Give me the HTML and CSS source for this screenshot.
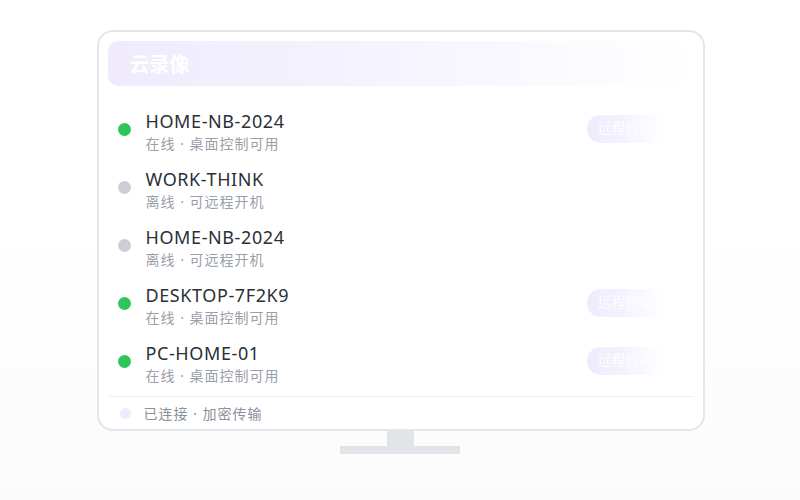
FILE: index.html
```html
<!DOCTYPE html>
<html lang="zh">
<head>
<meta charset="utf-8">
<title>云录像</title>
<link rel="stylesheet" href="styles.css">
</head>
<body>
<div class="stage">
  <div class="monitor">
    <div class="header">
      <span class="title">云录像</span>
      <span class="more">•••</span>
    </div>
    <div class="list">
      <div class="row">
        <span class="dot on"></span>
        <div class="info"><div class="name">HOME-NB-2024</div><div class="sub">在线 · 桌面控制可用</div></div>
        <span class="btn">远程控制</span>
      </div>
      <div class="row">
        <span class="dot off"></span>
        <div class="info"><div class="name">WORK-THINK</div><div class="sub">离线 · 可远程开机</div></div>
      </div>
      <div class="row">
        <span class="dot off"></span>
        <div class="info"><div class="name">HOME-NB-2024</div><div class="sub">离线 · 可远程开机</div></div>
      </div>
      <div class="row">
        <span class="dot on"></span>
        <div class="info"><div class="name">DESKTOP-7F2K9</div><div class="sub">在线 · 桌面控制可用</div></div>
        <span class="btn">远程控制</span>
      </div>
      <div class="row">
        <span class="dot on"></span>
        <div class="info"><div class="name">PC-HOME-01</div><div class="sub">在线 · 桌面控制可用</div></div>
        <span class="btn">远程控制</span>
      </div>
    </div>
    <div class="footer">
      <span class="fdot"></span>
      <span class="ftext">已连接 · 加密传输</span>
    </div>
  </div>
  <div class="neck"></div>
  <div class="base"></div>
</div>
</body>
</html>
```

FILE: styles.css
```css
html, body {
  margin: 0;
  padding: 0;
}
body {
  width: 800px;
  height: 500px;
  background: linear-gradient(180deg, #ffffff 0%, #ffffff 45%, #fbfbfb 100%);
  font-family: "Noto Sans", "Noto Sans CJK SC", sans-serif;
  overflow: hidden;
}
.stage {
  display: flex;
  flex-direction: column;
  align-items: center;
  padding-top: 30px;
}
.monitor {
  box-sizing: border-box;
  width: 608px;
  height: 401px;
  margin-left: 1px;
  border: 2px solid #e3e6ea;
  border-radius: 16px;
  background: #ffffff;
  padding: 9px 9px 0 9px;
  display: flex;
  flex-direction: column;
}
.header {
  height: 45px;
  border-radius: 10px;
  background: linear-gradient(90deg, #efebfd 0%, #f5f3fe 45%, #ffffff 100%);
  display: flex;
  align-items: center;
  justify-content: space-between;
  padding: 0 22px;
}
.title {
  color: #ffffff;
  font-family: "Noto Sans CJK SC", sans-serif;
  font-weight: 700;
  font-size: 20px;
}
.more {
  color: #ffffff;
  font-size: 14px;
  letter-spacing: 4px;
  margin-right: 6px;
}
.list {
  margin-top: 15px;
  display: flex;
  flex-direction: column;
}
.row {
  height: 58px;
  display: flex;
  align-items: center;
  padding-left: 10px;
  padding-right: 29px;
}
.dot {
  width: 13px;
  height: 13px;
  border-radius: 50%;
  flex: none;
  margin-right: 15px;
  margin-top: -2px;
}
.dot.on { background: #2ec55a; }
.dot.off { background: #cbced4; }
.info {
  flex: 1;
  display: flex;
  flex-direction: column;
  padding-top: 3px;
}
.name {
  font-size: 18px;
  line-height: 22px;
  color: #2b3038;
  letter-spacing: 0.6px;
}
.sub {
  margin-top: 3px;
  font-size: 14px;
  line-height: 18px;
  letter-spacing: 1px;
  color: #9aa0a9;
}
.btn {
  height: 28px;
  line-height: 28px;
  padding: 0 11px;
  border-radius: 14px;
  background: linear-gradient(90deg, #efebfd 0%, #f4f1fe 45%, #ffffff 100%);
  color: #ffffff;
  font-family: "Liberation Serif", "Noto Serif CJK SC", serif;
  font-size: 14px;
  margin-top: -2px;
}
.footer {
  margin-top: 5px;
  border-top: 1px solid #eef0f3;
  flex: 1;
  display: flex;
  align-items: center;
  padding-left: 12px;
}
.fdot {
  width: 11px;
  height: 11px;
  border-radius: 50%;
  background: #efebfd;
  margin-right: 13px;
}
.ftext {
  font-size: 14px;
  letter-spacing: 1px;
  color: #8a909a;
}
.neck {
  width: 27px;
  height: 15px;
  background: #e1e4e8;
  margin-left: 1px;
}
.base {
  width: 120px;
  height: 8px;
  background: #e1e4e8;
}
```
